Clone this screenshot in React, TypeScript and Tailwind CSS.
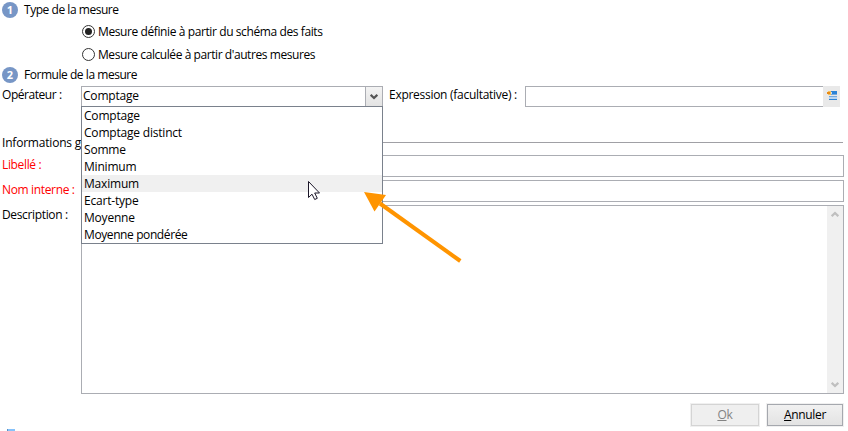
import type { ReactNode } from "react";

const operators = ["Comptage", "Comptage distinct", "Somme", "Minimum", "Maximum", "Ecart-type", "Moyenne", "Moyenne pondérée"];

function Step({ n, children }: { n: number; children: ReactNode }) {
  return (
    <div className="flex h-5 items-center tracking-[-0.46px]">
      <span className="ml-[2px] mr-[6px] flex size-4 items-center justify-center rounded-full bg-[#7796c6] pb-px font-['Open_Sans',sans-serif] text-[11px] font-bold leading-none tracking-normal text-white">{n}</span>
      <span>{children}</span>
    </div>
  );
}

function Radio({ checked, children }: { checked?: boolean; children: ReactNode }) {
  return (
    <div className={`ml-[82px] flex h-[23px] items-center gap-[3px] ${checked ? "tracking-[-0.4px]" : "tracking-[-0.43px]"}`}>
      <span className="flex size-[13px] items-center justify-center rounded-full border border-[#333] bg-white">
        {checked && <span className="size-[7px] rounded-full bg-[#222]" />}
      </span>
      <span>{children}</span>
    </div>
  );
}

function Chevron({ up, color }: { up?: boolean; color: string }) {
  return (
    <svg width="8" height="7" viewBox="0 0 8 7" fill="none" stroke={color} strokeWidth="2.2">
      <path d={up ? "M.7 5.2 4 2l3.3 3.2" : "M.7 1.8 4 5l3.3-3.2"} />
    </svg>
  );
}

export default function App() {
  return (
    <div className="relative flex h-[431px] w-[848px] flex-col overflow-hidden bg-white font-['Open_Sans','Noto_Sans',sans-serif] text-[12px] leading-4 tracking-[-0.35px] whitespace-nowrap text-black">
      <Step n={1}>Type de la mesure</Step>
      <Radio checked>Mesure définie à partir du schéma des faits</Radio>
      <Radio>Mesure calculée à partir d'autres mesures</Radio>
      <div className="-mt-px"><Step n={2}>Formule de la mesure</Step></div>

      <div className="mt-px flex h-[21px]">
        <label className="w-[81px] pl-[2px] pt-px tracking-[-0.45px]">Opérateur :</label>
        <div className="relative flex w-[302px] border border-[#abadb3] bg-white">
          <span className="flex-1 pl-px pt-px tracking-[-0.2px]">Comptage</span>
          <span className="flex w-[17px] items-center justify-center border-l border-[#abadb3] bg-gradient-to-b from-[#f3f3f3] to-[#e3e3e3]">
            <Chevron color="#555" />
          </span>
          <ul className="absolute -left-px top-[19px] z-10 h-[138px] w-[302px] border border-[#7a818c] bg-white tracking-[-0.2px]">
            {operators.map((op) => (
              <li key={op} className={`h-[17px] pl-[2px] pt-px ${op === "Maximum" ? "bg-[#f0f0f0]" : ""} ${op === "Moyenne pondérée" ? "tracking-[-0.4px]" : ""}`}>{op}</li>
            ))}
          </ul>
        </div>
        <label className="w-[142px] pl-[6px] pt-px tracking-[-0.28px]">Expression (facultative) :</label>
        <div className="w-[298px] border border-r-0 border-[#abadb3]" />
        <div className="flex w-[17px] justify-center bg-[#e9e9e9] pt-[5px]">
          <svg width="10" height="9" viewBox="0 0 10 9" shapeRendering="crispEdges">
            <path fill="#2b83d6" d="M4 0h6v3H4zM2 8h8v1H2z" />
            <path fill="#76a9dc" d="M4 3h6v1H4zM2 5h8v1H2z" />
            <path fill="#b9d6f2" d="M2 6h8v2H2z" />
            <path fill="#f5c15b" d="M1 0h3v4H1z" />
            <path fill="#e98b16" d="M0 1h3v2H0z" />
            <path fill="#cce0f4" d="M4 1h1v2H4z" />
          </svg>
        </div>
      </div>

      <div className="mt-[26px] flex h-5 items-center">
        <span className="w-[81px] overflow-hidden pl-[2px] tracking-[-0.2px]">Informations g</span>
        <span className="-mt-px w-[762px] border-t border-[#a0a0a5]" />
      </div>

      <div className="mt-[2px] flex h-[22px]">
        <label className="w-[81px] pl-[2px] pt-[2px] text-[#f00]">Libellé :</label>
        <div className="w-[763px] border border-[#abadb3]" />
      </div>
      <div className="mt-[3px] flex h-[22px]">
        <label className="w-[81px] pl-[2px] pt-[2px] text-[#f00]">Nom interne :</label>
        <div className="w-[763px] border border-[#abadb3]" />
      </div>
      <div className="mt-[3px] flex h-[189px]">
        <label className="w-[81px] pl-[2px] pt-[2px]">Description :</label>
        <div className="flex w-[763px] justify-end border border-[#abadb3]">
          <div className="flex w-4 flex-col items-center justify-between bg-[#f0f0f0] py-[5px]">
            <Chevron up color="#bfbfbf" />
            <Chevron color="#bfbfbf" />
          </div>
        </div>
      </div>

      <div className="mt-[10px] flex h-[22px] justify-end gap-2 pr-[5px]">
        <button className="flex w-[68px] items-center justify-center border border-[#d4d4d4] bg-[#efefef] tracking-[-0.2px] text-[#838383] ring-1 ring-[#f0f0f0]"><u>O</u>k</button>
        <button className="flex w-[76px] items-center justify-center border border-[#a5a8ae] bg-gradient-to-b from-[#f1f1f1] to-[#e3e3e3] ring-1 ring-[#f0f0f0]"><u>A</u>nnuler</button>
      </div>
      <div className="mt-auto ml-[7px] h-[2px] w-2 border-l border-[#5d91c4] bg-[#86c2fa]" />

      <svg className="pointer-events-none absolute left-0 top-0 z-20" width="848" height="431">
        <path d="M460.3 261 380 203.500" stroke="#ff9400" strokeWidth="4" />
        <path d="M364 192 386 195 374.500 211.500Z" fill="#ff9400" />
        <path d="M308.500 181.500v16l3.500-3.300 2.700 5.300 2.600-1.200-2.600-5.300h4.800z" fill="#fff" stroke="#1b1628" />
      </svg>
    </div>
  );
}
